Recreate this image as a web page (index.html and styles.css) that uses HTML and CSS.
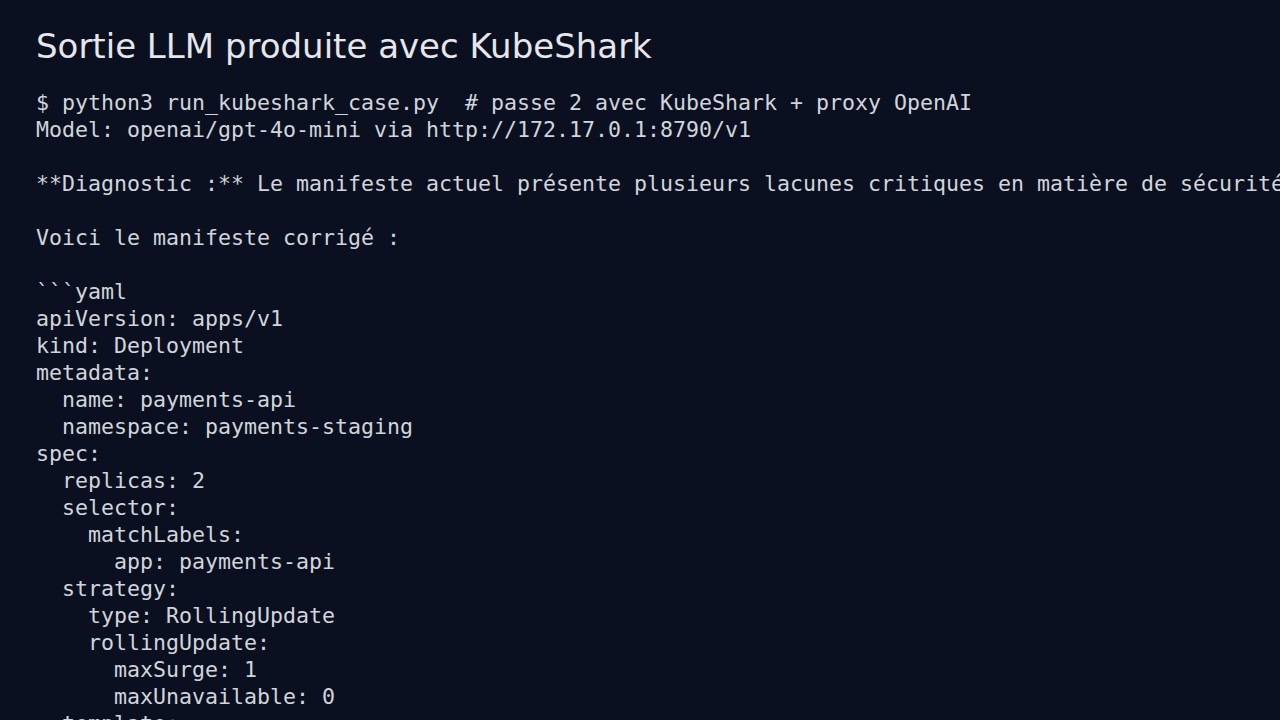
FILE: index.html
```html
<!DOCTYPE html>
<html lang="fr">
<head>
<meta charset="utf-8">
<title>Sortie LLM produite avec KubeShark</title>
<link rel="stylesheet" href="styles.css">
</head>
<body>
<main class="page">
<h1 class="title">Sortie LLM produite avec KubeShark</h1>
<pre class="output">$ python3 run_kubeshark_case.py  # passe 2 avec KubeShark + proxy OpenAI
Model: openai/gpt-4o-mini via http://172.17.0.1:8790/v1

**Diagnostic :** Le manifeste actuel présente plusieurs lacunes critiques en matière de sécurité et de fiabilité.

Voici le manifeste corrigé :

```yaml
apiVersion: apps/v1
kind: Deployment
metadata:
  name: payments-api
  namespace: payments-staging
spec:
  replicas: 2
  selector:
    matchLabels:
      app: payments-api
  strategy:
    type: RollingUpdate
    rollingUpdate:
      maxSurge: 1
      maxUnavailable: 0
  template:
    metadata:
      labels:
        app: payments-api
</pre>
</main>
</body>
</html>
```

FILE: styles.css
```css
html, body {
  margin: 0;
  padding: 0;
  background: #0b1020;
  overflow: hidden;
}
.page {
  padding: 24px 36px;
  height: 720px;
  box-sizing: border-box;
  overflow: hidden;
}
.title {
  margin: 0 0 21px 0;
  font-family: "DejaVu Sans", sans-serif;
  font-weight: 400;
  font-size: 34px;
  line-height: 44px;
  color: #e5e7eb;
}
.output {
  margin: 0;
  font-family: "DejaVu Sans Mono", monospace;
  font-size: 21.6px;
  line-height: 27px;
  color: #d1d5db;
  white-space: pre;
}
```
